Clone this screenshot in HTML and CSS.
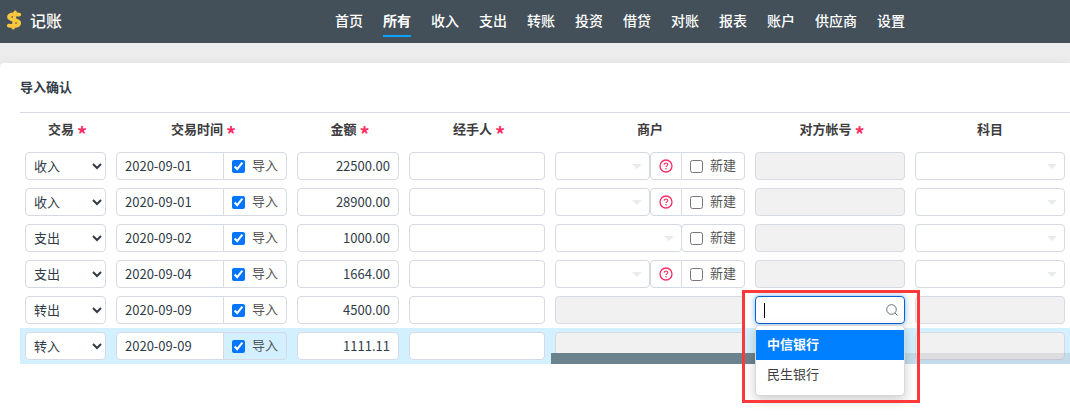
FILE: index.html
```html
<!DOCTYPE html>
<html lang="zh-CN">
<head>
<meta charset="utf-8">
<title>记账</title>
<link rel="stylesheet" href="styles.css">
</head>
<body>
<svg class="sprite" aria-hidden="true">
  <symbol id="caret" viewBox="0 0 10 5"><path d="M0 0h10L5 5z" fill="#e9ebf0"/></symbol>
  <symbol id="help" viewBox="0 0 14 14"><circle cx="7" cy="7" r="6" fill="none" stroke="#fb2b63" stroke-width="1.3"/><path d="M5.2 5.7c0-1 .8-1.7 1.8-1.7s1.8.7 1.8 1.6c0 1.2-1.8 1.3-1.8 2.5" fill="none" stroke="#fb2b63" stroke-width="1.1"/><circle cx="7" cy="9.8" r=".8" fill="#fb2b63"/></symbol>
</svg>
<header class="topbar">
  <a class="brand" href="#">
    <svg class="logo" viewBox="0 0 16 20" aria-hidden="true"><g fill="none" stroke="#f7c83f" stroke-linecap="round" stroke-linejoin="round"><path d="M9.2 2.2L7.2 18" stroke-width="3.2"/><path d="M13.3 4.6C10.5 4.2 3 3.4 3 7.1c0 3.7 10.2 2 10.2 5.9 0 3.6-6.9 3.2-10.4 2.6" stroke-width="3.8"/></g></svg>
    <span>记账</span>
  </a>
  <nav class="nav">
    <a href="#">首页</a><a href="#" class="active">所有</a><a href="#">收入</a><a href="#">支出</a><a href="#">转账</a><a href="#">投资</a><a href="#">借贷</a><a href="#">对账</a><a href="#">报表</a><a href="#">账户</a><a href="#">供应商</a><a href="#">设置</a>
  </nav>
</header>
<main class="panel">
  <h1 class="title">导入确认</h1>
  <div class="table-area">
  <table class="grid">
    <colgroup><col class="c-type"><col class="c-date"><col class="c-money"><col class="c-person"><col class="c-trader"><col class="c-account"><col class="c-category"></colgroup>
    <thead>
      <tr>
        <th><span class="required">交易</span></th>
        <th><span class="required">交易时间</span></th>
        <th><span class="required">金额</span></th>
        <th><span class="required">经手人</span></th>
        <th><span class="heading">商户</span></th>
        <th><span class="required">对方帐号</span></th>
        <th><span class="heading">科目</span></th>
      </tr>
    </thead>
    <tbody>
      <tr>
        <td><select class="control" aria-label="交易"><option>收入</option></select></td>
        <td><div class="group"><input class="control" type="text" value="2020-09-01" aria-label="交易时间"><label class="addon"><input type="checkbox" checked><span>导入</span></label></div></td>
        <td><input class="control money" type="text" value="22500.00" aria-label="金额"></td>
        <td><input class="control" type="text" aria-label="经手人"></td>
        <td><div class="group"><div class="picker"><select class="control" aria-label="商户"></select><svg class="caret"><use href="#caret"/></svg></div><button class="hint" type="button" aria-label="帮助"><svg class="help"><use href="#help"/></svg></button><label class="addon"><input type="checkbox"><span>新建</span></label></div></td>
        <td><input class="control" type="text" disabled aria-label="对方帐号"></td>
        <td><div class="picker"><select class="control" aria-label="科目"></select><svg class="caret"><use href="#caret"/></svg></div></td>
      </tr>
      <tr>
        <td><select class="control" aria-label="交易"><option>收入</option></select></td>
        <td><div class="group"><input class="control" type="text" value="2020-09-01" aria-label="交易时间"><label class="addon"><input type="checkbox" checked><span>导入</span></label></div></td>
        <td><input class="control money" type="text" value="28900.00" aria-label="金额"></td>
        <td><input class="control" type="text" aria-label="经手人"></td>
        <td><div class="group"><div class="picker"><select class="control" aria-label="商户"></select><svg class="caret"><use href="#caret"/></svg></div><button class="hint" type="button" aria-label="帮助"><svg class="help"><use href="#help"/></svg></button><label class="addon"><input type="checkbox"><span>新建</span></label></div></td>
        <td><input class="control" type="text" disabled aria-label="对方帐号"></td>
        <td><div class="picker"><select class="control" aria-label="科目"></select><svg class="caret"><use href="#caret"/></svg></div></td>
      </tr>
      <tr>
        <td><select class="control" aria-label="交易"><option>支出</option></select></td>
        <td><div class="group"><input class="control" type="text" value="2020-09-02" aria-label="交易时间"><label class="addon"><input type="checkbox" checked><span>导入</span></label></div></td>
        <td><input class="control money" type="text" value="1000.00" aria-label="金额"></td>
        <td><input class="control" type="text" aria-label="经手人"></td>
        <td><div class="group"><div class="picker"><select class="control" aria-label="商户"></select><svg class="caret"><use href="#caret"/></svg></div><label class="addon rounded"><input type="checkbox"><span>新建</span></label></div></td>
        <td><input class="control" type="text" disabled aria-label="对方帐号"></td>
        <td><div class="picker"><select class="control" aria-label="科目"></select><svg class="caret"><use href="#caret"/></svg></div></td>
      </tr>
      <tr>
        <td><select class="control" aria-label="交易"><option>支出</option></select></td>
        <td><div class="group"><input class="control" type="text" value="2020-09-04" aria-label="交易时间"><label class="addon"><input type="checkbox" checked><span>导入</span></label></div></td>
        <td><input class="control money" type="text" value="1664.00" aria-label="金额"></td>
        <td><input class="control" type="text" aria-label="经手人"></td>
        <td><div class="group"><div class="picker"><select class="control" aria-label="商户"></select><svg class="caret"><use href="#caret"/></svg></div><button class="hint" type="button" aria-label="帮助"><svg class="help"><use href="#help"/></svg></button><label class="addon"><input type="checkbox"><span>新建</span></label></div></td>
        <td><input class="control" type="text" disabled aria-label="对方帐号"></td>
        <td><div class="picker"><select class="control" aria-label="科目"></select><svg class="caret"><use href="#caret"/></svg></div></td>
      </tr>
      <tr>
        <td><select class="control" aria-label="交易"><option>转出</option></select></td>
        <td><div class="group"><input class="control" type="text" value="2020-09-09" aria-label="交易时间"><label class="addon"><input type="checkbox" checked><span>导入</span></label></div></td>
        <td><input class="control money" type="text" value="4500.00" aria-label="金额"></td>
        <td><input class="control" type="text" aria-label="经手人"></td>
        <td><input class="control" type="text" disabled aria-label="商户"></td>
        <td>
          <div class="search">
            <input class="control focused" type="text" aria-label="对方帐号">
            <i class="cursor"></i>
            <svg class="lens" viewBox="0 0 12 12" aria-hidden="true"><circle cx="5.5" cy="5.5" r="4.8"/><path d="M9 9l2.5 2.5"/></svg>
            <div class="menu"><button type="button" class="option selected">中信银行</button><button type="button" class="option">民生银行</button></div>
            <div class="highlight"></div>
          </div>
        </td>
        <td><input class="control" type="text" disabled aria-label="科目"></td>
      </tr>
      <tr class="hover">
        <td><select class="control" aria-label="交易"><option>转入</option></select></td>
        <td><div class="group"><input class="control" type="text" value="2020-09-09" aria-label="交易时间"><label class="addon"><input type="checkbox" checked><span>导入</span></label></div></td>
        <td><input class="control money" type="text" value="1111.11" aria-label="金额"></td>
        <td><input class="control" type="text" aria-label="经手人"></td>
        <td><input class="control" type="text" disabled aria-label="商户"></td>
        <td><input class="control" type="text" disabled aria-label="对方帐号"></td>
        <td><input class="control" type="text" disabled aria-label="科目"></td>
      </tr>
    </tbody>
  </table>
  <div class="scrollbar"><div class="thumb"></div></div>
  </div>
</main>
</body>
</html>
```
FILE: styles.css
```css
* { box-sizing: border-box; }
body {
  margin: 0;
  min-height: 100vh;
  display: flex;
  flex-direction: column;
  gap: 20px;
  background: #ededed;
  color: #3c4353;
  font: 13px/20px "Noto Sans CJK SC", sans-serif;
}
input, select, button { font: inherit; color: inherit; margin: 0; }
.sprite { display: none; }

.topbar {
  display: flex;
  height: 43px;
  background: #434f59;
}
.topbar a { color: #fff; text-decoration: none; }
.brand {
  display: flex;
  align-items: center;
  gap: 8px;
  width: 335px;
  padding: 0 0 4px 6px;
  font-size: 16px;
  font-weight: 500;
}
.logo { width: 16px; height: 20px; }
.nav { display: flex; gap: 20px; font-size: 14px; font-weight: 500; }
.nav a {
  height: 37px;
  padding-top: 10px;
  border-bottom: 2px solid transparent;
}
.nav .active { font-weight: 700; border-color: #0aa2ff; }

.panel {
  flex: 1;
  padding: 14px 0 20px 20px;
  background: #fff;
  border-radius: 4px 0 0 0;
  box-shadow: 0 0 12px rgba(0, 0, 0, .06);
}
.title {
  margin: 0 0 15px;
  font-size: 13px;
  line-height: 20px;
  font-weight: 700;
  color: #313c48;
}
.table-area { position: relative; }
.grid {
  width: 100%;
  table-layout: fixed;
  border-collapse: separate;
  border-spacing: 0;
  border-top: 1px solid #d5d9e3;
}
.c-type { width: 91px; }
.c-date { width: 181px; }
.c-money { width: 112px; }
.c-person { width: 146px; }
.c-trader { width: 200px; }
.c-account { width: 160px; }
th {
  height: 35px;
  padding: 6px 0 0;
  vertical-align: top;
  font-weight: 700;
  color: #3d3d40;
}
.heading, .required {
  display: flex;
  justify-content: center;
  gap: 3px;
  height: 20px;
}
.required { padding-left: 4px; }
.required::after {
  content: "*";
  padding-top: 5px;
  color: #ff2d64;
  font-size: 20px;
}
td { height: 36px; padding: 4px 5px; }
.hover td { background: #d2f0ff; }

.control {
  display: block;
  width: 100%;
  height: 28px;
  padding: 0 8px 2px;
  background: #fff;
  border: 1px solid #d5d9e3;
  border-radius: 4px;
  color: #313c48;
  outline: 0;
}
select.control { padding: 0 0 2px 4px; }
.money { text-align: right; }
.control:disabled { background: #f1f1f1; }
.group { display: flex; }
.group > .control {
  flex: 1;
  min-width: 0;
  border-radius: 4px 0 0 4px;
}
.addon {
  display: flex;
  align-items: center;
  gap: 7px;
  width: 64px;
  height: 28px;
  margin-left: -1px;
  padding-left: 8px;
  border: 1px solid #d5d9e3;
  border-radius: 0 4px 4px 0;
  color: #555;
}
.addon span { padding-bottom: 2px; }
.addon input { width: 13px; height: 13px; }
.rounded { border-radius: 4px; }
.picker { position: relative; flex: 1; }
.picker .control { appearance: none; }
.caret {
  position: absolute;
  top: 12px;
  right: 8px;
  width: 10px;
  height: 5px;
}
.hint {
  display: grid;
  place-items: center;
  width: 32px;
  height: 28px;
  padding: 0;
  background: none;
  border: 1px solid #d5d9e3;
  border-radius: 4px 0 0 4px;
}
.help { width: 14px; height: 14px; }

.search { position: relative; z-index: 2; }
.focused { border-color: #0a63c8; box-shadow: 0 0 6px rgba(0, 108, 230, .5); }
.cursor {
  position: absolute;
  top: 7px;
  left: 9px;
  width: 1px;
  height: 15px;
  background: #000;
}
.lens {
  position: absolute;
  top: 8px;
  right: 7px;
  width: 12px;
  height: 12px;
  fill: none;
  stroke: #66727c;
}
.menu {
  position: absolute;
  top: 29px;
  left: 0;
  right: 0;
  padding: 4px 0 5px;
  background: #fff;
  border: 1px solid #d8d8d8;
  border-radius: 4px;
  box-shadow: 0 4px 12px rgba(0, 0, 0, .2);
}
.option {
  display: block;
  width: 100%;
  height: 30px;
  padding: 0 11px 2px;
  border: 0;
  background: none;
  color: #3d3d40;
  text-align: left;
}
.selected { background: #0080ff; color: #fff; font-weight: 700; }
.highlight {
  position: absolute;
  top: -6px;
  left: -13px;
  right: -15px;
  height: 113px;
  border: 3px solid #fa3a3a;
  pointer-events: none;
}
.scrollbar {
  position: absolute;
  bottom: 0;
  left: 531px;
  right: 0;
  height: 11px;
  background: rgba(110, 110, 120, .15);
}
.thumb { width: 60%; height: 11px; background: #6b838d; }
```
